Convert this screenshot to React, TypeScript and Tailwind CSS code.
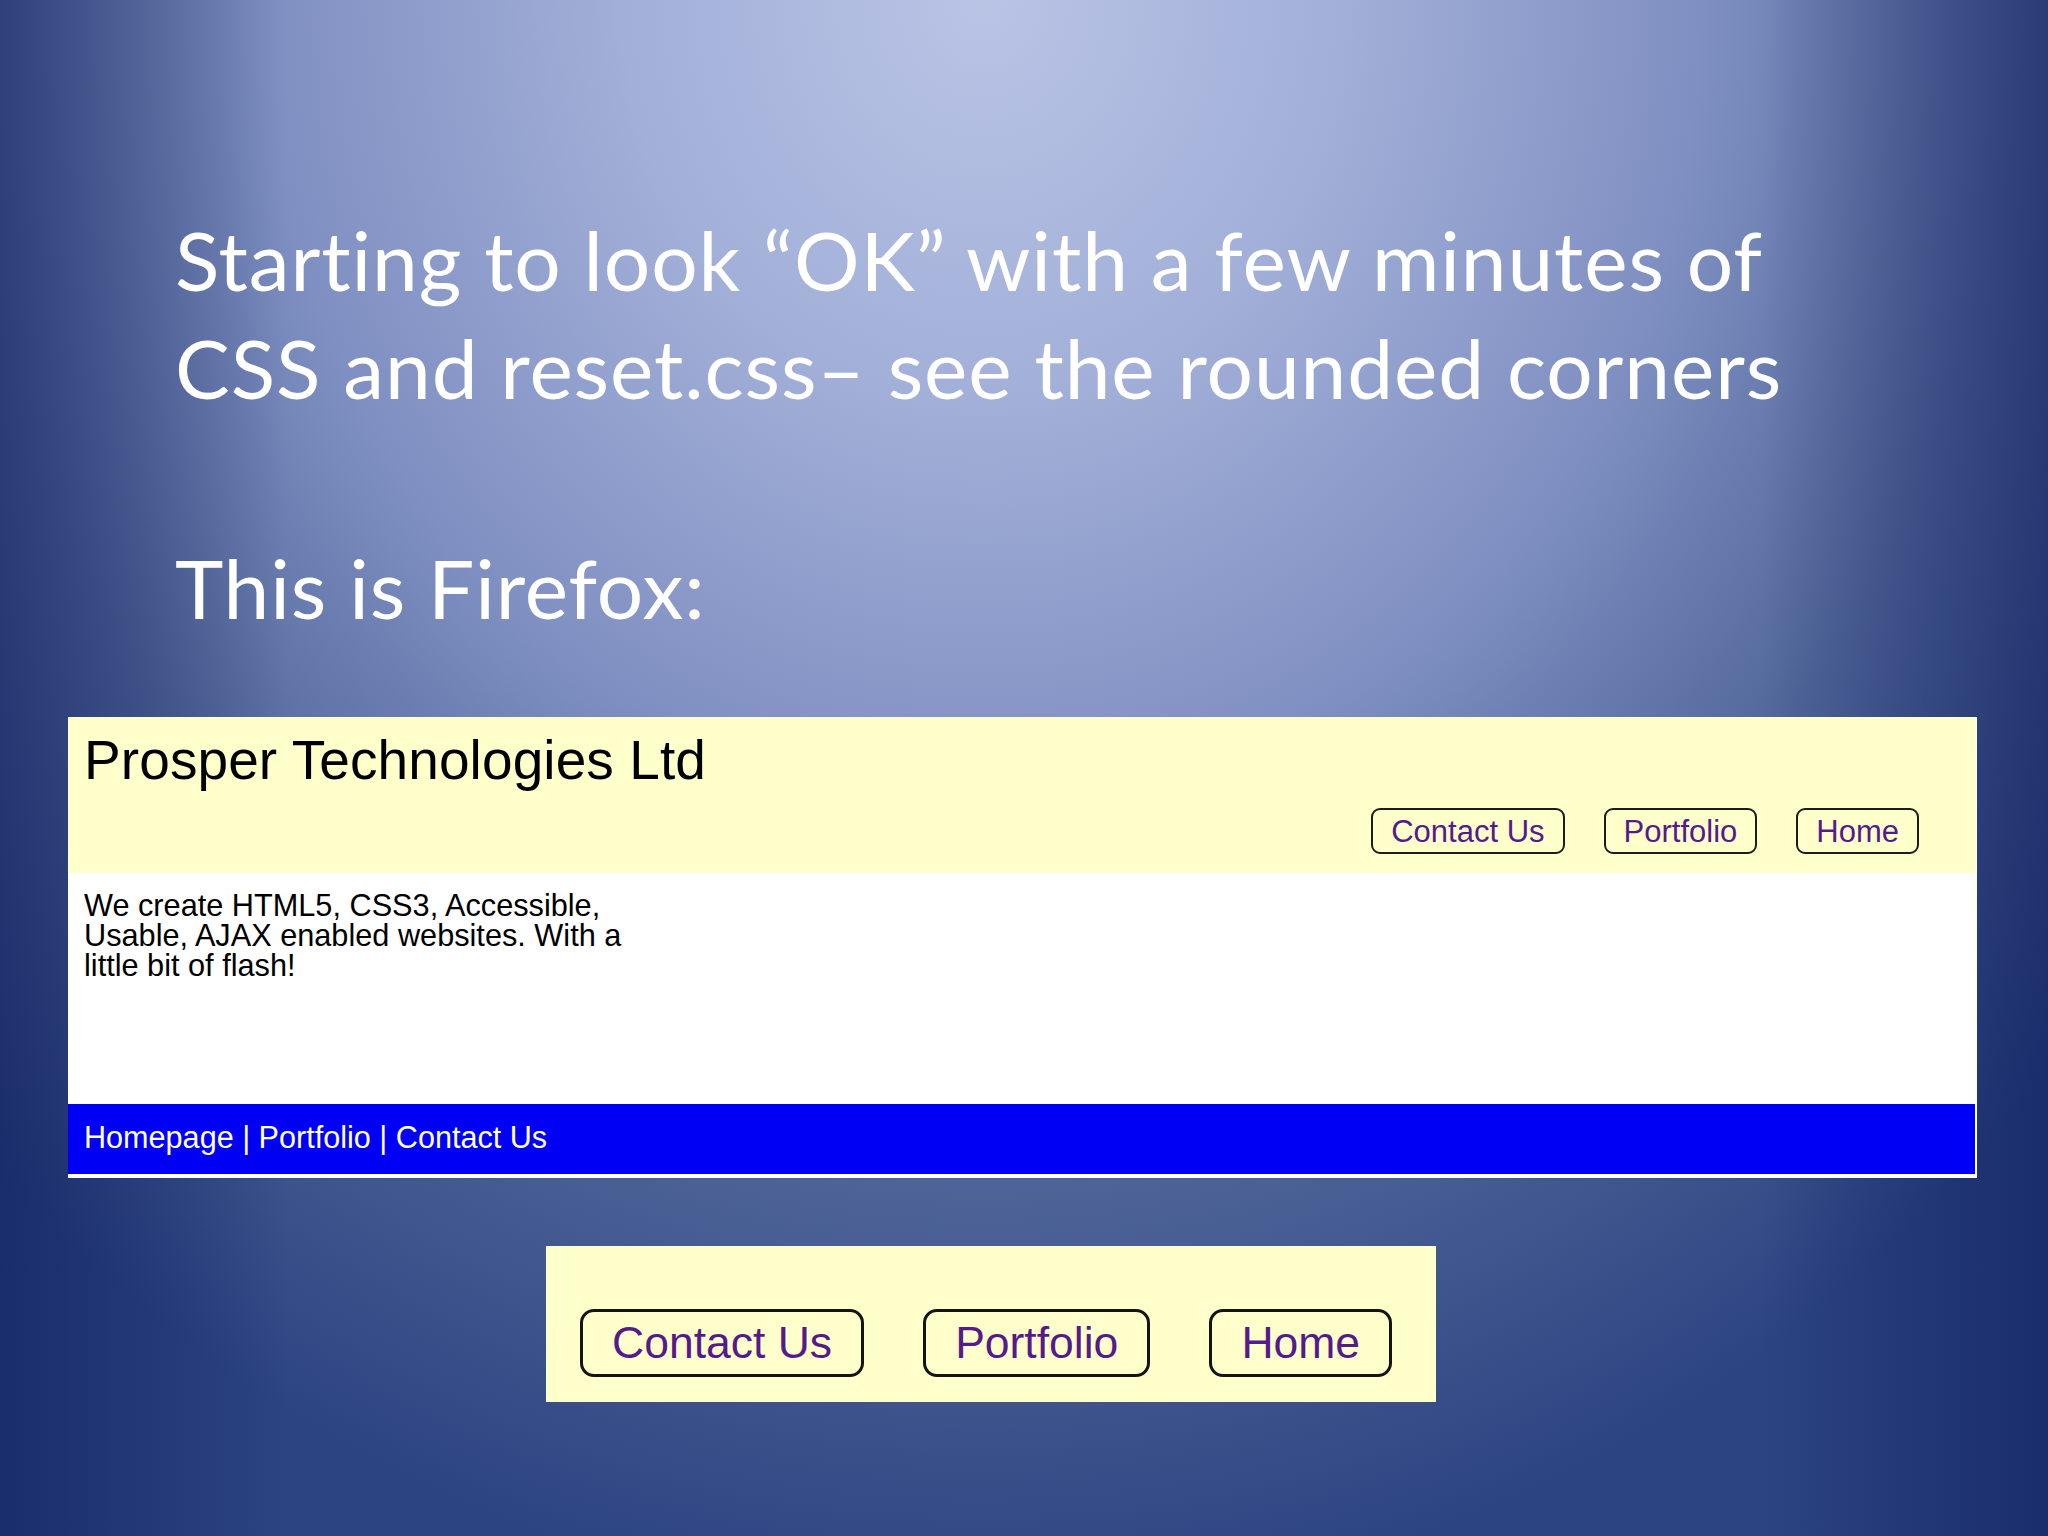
import React from "react";

function NavButton({ label, big }: { label: string; big?: boolean }) {
  return big ? (
    <span className="flex h-[68px] items-center rounded-[14px] border-[3px] border-[#141414] px-[29px] text-[44.5px] leading-none text-[#551a8b]">
      {label}
    </span>
  ) : (
    <span className="flex h-[46px] items-center rounded-[9px] border-2 border-[#1c1c1c] px-[18px] text-[31px] leading-none text-[#551a8b]">
      {label}
    </span>
  );
}

export default function App() {
  return (
    <div className="h-[1536px] w-[2048px] overflow-hidden bg-[linear-gradient(to_right,rgba(8,22,85,0.5),rgba(8,22,85,0)_14%,rgba(8,22,85,0)_86%,rgba(8,22,85,0.5)),radial-gradient(ellipse_70%_105%_at_48%_0%,#b9c4e5_0%,#a2afd8_25%,#7f8fc1_50%,#506699_72%,#2c4482_100%)] font-['Liberation_Sans',Arial,sans-serif]">
      <div className="pl-[175px] pt-[205px] font-['Lato',sans-serif] text-[82px] leading-[108px] tracking-[0.9px] text-white [font-variant-ligatures:none]">
        <p>Starting to look “OK” with a few minutes of</p>
        <p>CSS and reset.css– see the rounded corners</p>
        <p className="mt-[112px]">This is Firefox:</p>
      </div>

      <div className="ml-[68px] mt-[76px] flex w-[1909px] flex-col bg-white pb-[4px] pr-[2px]">
        <div className="-mr-[1px] flex h-[156px] flex-col bg-[#ffffcc] pl-[16px] pr-[57px] pt-[16px]">
          <h1 className="text-[55px] leading-[55px] tracking-[0.1px] text-black">Prosper Technologies Ltd</h1>
          <div className="mt-[20px] flex justify-end gap-[39px]">
            <NavButton label="Contact Us" />
            <NavButton label="Portfolio" />
            <NavButton label="Home" />
          </div>
        </div>
        <div className="h-[231px] pl-[16px] pt-[18px] text-[30.7px] leading-[30px] text-black">
          <p>We create HTML5, CSS3, Accessible,</p>
          <p>Usable, AJAX enabled websites. With a</p>
          <p>little bit of flash!</p>
        </div>
        <div className="h-[70px] bg-[#0000f5] pl-[16px] text-[30.6px] leading-[67px] text-white">
          Homepage | Portfolio | Contact Us
        </div>
      </div>

      <div className="ml-[546px] mt-[68px] flex h-[156px] w-[890px] gap-[59px] bg-[#ffffcc] pl-[34px] pt-[63px]">
        <NavButton label="Contact Us" big />
        <NavButton label="Portfolio" big />
        <NavButton label="Home" big />
      </div>
    </div>
  );
}
